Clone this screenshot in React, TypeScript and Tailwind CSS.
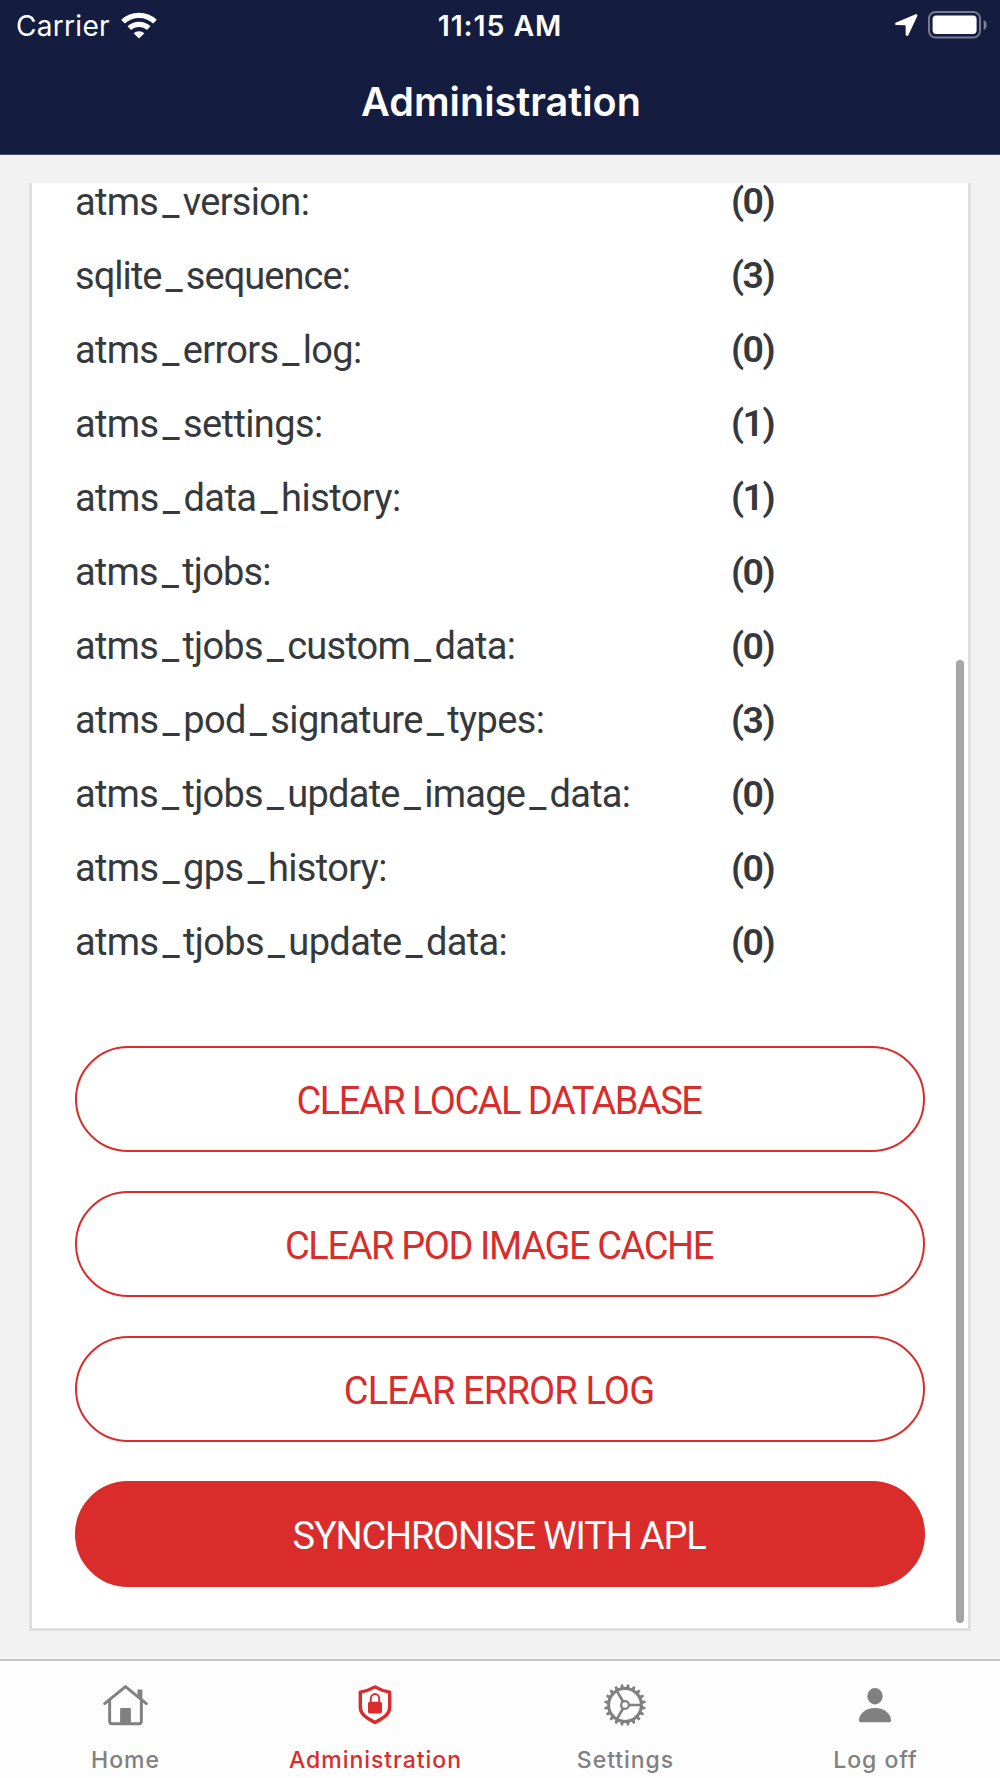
import React, { Fragment } from 'react';
import clsx from 'clsx';

interface TableCount {
  name: string;
  count: number;
  tracking: string;
}

const tables: TableCount[] = [
  { name: 'atms_version', count: 0, tracking: 'tracking-[-0.69px]' },
  { name: 'sqlite_sequence', count: 3, tracking: 'tracking-[-0.95px]' },
  { name: 'atms_errors_log', count: 0, tracking: 'tracking-[-0.69px]' },
  { name: 'atms_settings', count: 1, tracking: 'tracking-[-0.62px]' },
  { name: 'atms_data_history', count: 1, tracking: 'tracking-[-0.55px]' },
  { name: 'atms_tjobs', count: 0, tracking: 'tracking-[-0.8px]' },
  { name: 'atms_tjobs_custom_data', count: 0, tracking: 'tracking-[-0.76px]' },
  { name: 'atms_pod_signature_types', count: 3, tracking: 'tracking-[-0.61px]' },
  { name: 'atms_tjobs_update_image_data', count: 0, tracking: 'tracking-[-0.75px]' },
  { name: 'atms_gps_history', count: 0, tracking: 'tracking-[-0.64px]' },
  { name: 'atms_tjobs_update_data', count: 0, tracking: 'tracking-[-0.65px]' },
];

const actions = [
  { label: 'CLEAR LOCAL DATABASE', tracking: 'tracking-[-1.5px]' },
  { label: 'CLEAR POD IMAGE CACHE', tracking: 'tracking-[-1.38px]' },
  { label: 'CLEAR ERROR LOG', tracking: 'tracking-[-0.85px]' },
  { label: 'SYNCHRONISE WITH APL', tracking: 'tracking-[-1.2px]', primary: true },
];

function WifiIcon() {
  return (
    <svg width="36" height="27" viewBox="0 0 36 27" fill="none">
      <path d="M2 9.6a23.5 23.5 0 0 1 32 0" stroke="white" strokeWidth="5.2" />
      <path d="M8.3 16.2a14 14 0 0 1 19.4 0" stroke="white" strokeWidth="5.2" />
      <path d="M18 26.6l-5.4-5.3a7.8 7.8 0 0 1 10.8 0z" fill="white" />
    </svg>
  );
}

function LocationIcon() {
  return (
    <svg width="23" height="23" viewBox="0 0 23 23" fill="white">
      <path d="M20.7.3 1.1 8.6c-1.5.7-1.3 2.4.3 2.5l8.6.1c.4 0 .6.2.6.6l.1 8.8c.1 1.8 2 1.9 2.7.4L22.2 2.2C22.7.8 22-.2 20.7.3z" />
    </svg>
  );
}

function BatteryIcon() {
  return (
    <svg width="60" height="28" viewBox="0 0 60 28" fill="none">
      <rect x="1" y="1" width="51" height="25.5" rx="6.5" stroke="white" strokeOpacity="0.42" strokeWidth="2" />
      <rect x="4.6" y="4.6" width="44" height="18.3" rx="3.6" fill="white" />
      <path d="M55.7 9v10c1.9-.9 3-2.7 3-5s-1.1-4.1-3-5z" fill="white" fillOpacity="0.45" />
    </svg>
  );
}

function HomeIcon() {
  return (
    <svg width="45" height="42" viewBox="0 0 46 42" fill="none" stroke="currentColor" strokeLinecap="round" strokeLinejoin="round">
      <path d="M1.7 19.5 23 2.2 44.3 19.5" strokeWidth="3" />
      <path d="M6.8 16v21.7a2.5 2.5 0 0 0 2.5 2.5h27.400a2.500 2.500 0 0 0 2.500-2.500V16" strokeWidth="3" />
      <path d="M36 6h3.500v9l-3.500-3z" fill="currentColor" strokeWidth="1.5" />
      <path d="M17.5 40V25.300a1.200 1.200 0 0 1 1.200-1.200h8.600a1.200 1.200 0 0 1 1.200 1.200V40z" fill="currentColor" stroke="none" />
    </svg>
  );
}

function ShieldIcon() {
  return (
    <svg width="34" height="40" viewBox="0 0 34 40" fill="none" stroke="currentColor">
      <path d="M17 1.9C12.5 4.6 7.5 6.2 2.3 7.1V22c0 6.5 4 9.5 14.7 15.6C27.7 31.5 31.7 28.5 31.7 22V7.1C26.5 6.2 21.5 4.6 17 1.9z" strokeWidth="3.4" strokeLinejoin="round" />
      <path d="M12.8 18v-4.3a4.2 4.7 0 0 1 8.4 0V18" strokeWidth="1.9" />
      <rect x="10" y="16.8" width="14" height="11.7" rx="1.7" fill="currentColor" stroke="none" />
    </svg>
  );
}

function GearIcon() {
  return (
    <svg width="44" height="44" viewBox="0 0 44 44" fill="none" stroke="currentColor">
      <circle cx="22" cy="22" r="16.4" strokeWidth="3" />
      {Array.from({ length: 20 }, (_, i) => (
        <path key={i} d="M20.1 5.2 20.9 1.2h2.2l.8 4z" fill="currentColor" stroke="none" transform={`rotate(${i * 18 + 9} 22 22)`} />
      ))}
      <circle cx="22" cy="22" r="3.9" strokeWidth="2.3" />
      <path d="M26 22h12M20 18.5 13.8 7.8M20 25.5l-6.2 10.7" strokeWidth="2.6" />
    </svg>
  );
}

function PersonIcon() {
  return (
    <svg width="32" height="35" viewBox="0 0 32 35" fill="currentColor">
      <ellipse cx="16" cy="8.3" rx="7.7" ry="8.2" />
      <path d="M2.2 34.3C.8 34.3 0 33.5 0 32.2c0-5.7 6.2-12.1 16-12.1s16 6.4 16 12.1c0 1.3-.8 2.1-2.2 2.1z" />
    </svg>
  );
}

const tabs = [
  { label: 'Home', icon: HomeIcon },
  { label: 'Administration', icon: ShieldIcon, active: true },
  { label: 'Settings', icon: GearIcon },
  { label: 'Log off', icon: PersonIcon },
];

function TableName({ name }: { name: string }) {
  return (
    <>
      {name.split('_').map((part, i) => (
        <Fragment key={i}>
          {i > 0 && <span className="mx-1">_</span>}
          {part}
        </Fragment>
      ))}
      :
    </>
  );
}

export default function App() {
  return (
    <div className="flex h-[1778px] w-[1000px] flex-col overflow-hidden bg-[#f2f2f2] font-['Roboto',sans-serif]">
      <header className="h-[155px] shrink-0 border-b border-[#4a4f69] bg-[#141c3f] font-['Inter',sans-serif] text-white">
        <div className="grid h-[50px] grid-cols-3 items-center pr-3 pl-4">
          <div className="flex items-center gap-[11px]">
            <span className="pt-0.5 text-[28px] tracking-[0.3px]">Carrier</span>
            <WifiIcon />
          </div>
          <div className="pt-0.5 pr-[4px] text-center text-[28.5px] font-semibold tracking-[0.9px] whitespace-nowrap">11:15 AM</div>
          <div className="flex items-center justify-end gap-[10px]">
            <LocationIcon />
            <BatteryIcon />
          </div>
        </div>
        <h1 className="pt-[22px] pl-[2px] text-center text-[39.6px] leading-[60px] font-semibold">Administration</h1>
      </header>

      <main className="relative mx-[29px] mt-[28px] h-[1448px] shrink-0 overflow-hidden border-x-[3px] border-b-[3px] border-[#dedede] bg-white px-[43px]">
        <div className="-mt-[18px]">
          {tables.map(table => (
            <div key={table.name} className="flex h-[74.06px] items-center text-[38px] leading-none text-[#35393c]">
              <div className={clsx('w-[656px] whitespace-nowrap', table.tracking)}>
                <TableName name={table.name} />
              </div>
              <div className="text-[37.5px] font-semibold tracking-[-1.5px]">({table.count})</div>
            </div>
          ))}
        </div>

        <div className="mt-[66px] flex flex-col gap-[39px]">
          {actions.map(action => (
            <button
              key={action.label}
              className={clsx(
                'h-[106px] rounded-full border-2 border-[#d92c2b] pt-[5px] pr-[2px] text-[38px] leading-none',
                action.primary ? 'bg-[#d92c2b] text-white' : 'text-[#d92c2b]',
                action.tracking,
              )}
            >
              {action.label}
            </button>
          ))}
        </div>

        <div className="absolute top-[477px] right-[4px] h-[963px] w-[8px] rounded-full bg-[#a5a5a5]" />
      </main>

      <nav className="mt-auto grid h-[119px] shrink-0 grid-cols-4 border-t-2 border-[#c5c5c5] bg-[#fdfdfd] font-['Inter',sans-serif]">
        {tabs.map(({ label, icon: Icon, active }) => (
          <div key={label} className={clsx('flex flex-col items-center', active ? 'text-[#d92c2b]' : 'text-[#808080]')}>
            <div className="mt-[21px] flex h-[46px] items-center">
              <Icon />
            </div>
            <span className="mt-[17px] pl-px text-[23px] leading-[30px] font-medium tracking-[0.95px]">{label}</span>
          </div>
        ))}
      </nav>
    </div>
  );
}
